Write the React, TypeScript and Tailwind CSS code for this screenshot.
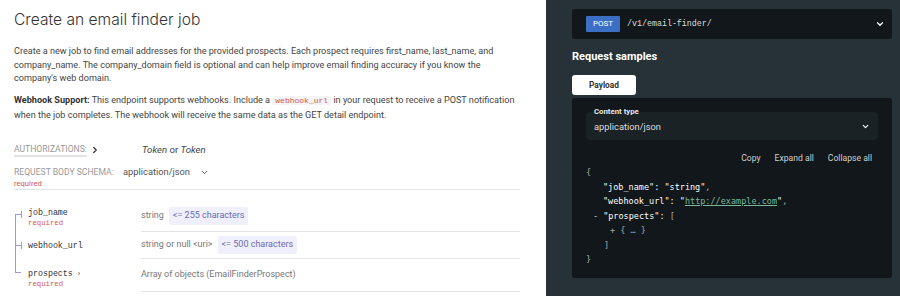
import { ChevronDown, ChevronRight } from "lucide-react";

const mono = "font-['Liberation_Mono',monospace]";
const codeFont = "font-['DejaVu_Sans_Mono',monospace]";

function Field({
  name,
  required,
  type,
  badge,
  more,
  first,
  last,
  rowClass,
  namePad,
}: {
  name: string;
  required?: boolean;
  type: string;
  badge?: string;
  more?: boolean;
  first?: boolean;
  last?: boolean;
  rowClass: string;
  namePad: string;
}) {
  return (
    <div className={`flex ${rowClass}`}>
      {/* tree line on the left */}
      <div className="relative w-[127px] shrink-0 pl-[14px]">
        <span
          className={`absolute left-[1px] w-px bg-[#9c9cc9] ${first ? "top-[13px] bottom-0" : last ? "top-0 h-[14px]" : "top-0 bottom-0"}`}
        />
        <span className="absolute left-[1px] top-[13px] h-px w-[6px] bg-[#9c9cc9]" />
        {!last && <span className="absolute left-[7px] top-[10px] h-[7px] w-px bg-[#9c9cc9]" />}
        <div className={`${namePad} ${mono} text-[8.3px] leading-[10px] text-[#333]`}>
          {name}
          {more && <span className="ml-[5px] font-['Roboto',sans-serif] text-[8px]">›</span>}
        </div>
        {required && (
          <div className={`${mono} text-[7.3px] leading-[10px] text-[#d9534f]`}>required</div>
        )}
      </div>
      <div className="flex flex-1 items-center border-b border-[#e4e4e4] text-[9px] text-[#777]">
        <span>{type}</span>
        {badge && (
          <span className="ml-[5px] rounded-[2px] bg-[#eff0fb] px-[4px] py-[2px] text-[#6b6bb5]">
            {badge}
          </span>
        )}
      </div>
    </div>
  );
}

export default function App() {
  return (
    <div className="flex h-[296px] w-[900px] overflow-hidden font-['Roboto',sans-serif]">
      <div className="w-[546px] shrink-0 bg-white pl-[14px] pr-[26px]">
        <h1 className="pt-[10px] font-['Inter',sans-serif] text-[15.6px] leading-[20px] font-light text-[#333]">
          Create an email finder job
        </h1>
        <p className="mt-[15px] text-[9.1px] leading-[13.7px] text-[#444]">
          Create a new job to find email addresses for the provided prospects. Each prospect requires first_name, last_name, and
          company_name. The company_domain field is optional and can help improve email finding accuracy if you know the
          company's web domain.
        </p>
        <p className="mt-[7px] text-[9.1px] leading-[14px] text-[#444]">
          <b className="font-bold text-[#333]">Webhook Support:</b> This endpoint supports webhooks. Include a{" "}
          <code className={`${mono} rounded-[2px] bg-[#f4f4f4] px-[3px] text-[8px] text-[#d9534f]`}>webhook_url</code>{" "}
          in your request to receive a POST notification when the job completes. The webhook will receive the same data as the GET detail endpoint.
        </p>

        <div className="mt-[21px] flex h-[14px] items-center">
          <div className="flex w-[128px] items-center">
            <span className="border-b-2 border-[#e2e2e2] text-[8.6px] leading-[12px] text-[#999]">AUTHORIZATIONS:</span>
            <ChevronRight className="ml-[3px] h-[10px] w-[10px] text-[#333]" strokeWidth={3} />
          </div>
          <span className="text-[9.6px] text-[#444]">
            <i>Token</i> or <i>Token</i>
          </span>
        </div>

        <div className="mt-[9px] flex h-[12px] items-center">
          <span className="w-[109px] text-[8.6px] leading-[12px] text-[#999]">REQUEST BODY SCHEMA:</span>
          <span className="text-[9.3px] text-[#555]">application/json</span>
          <ChevronDown className="ml-[10px] h-[9px] w-[9px] text-[#555]" strokeWidth={2.5} />
        </div>
        <div className="pt-[1px] text-[7.6px] leading-[10px] text-[#d9534f]">required</div>
        <div className="border-b border-[#e4e4e4]" />

        <div className="pt-[11px]">
          <Field name="job_name" required type="string" badge="<= 255 characters" first rowClass="h-[31px]" namePad="pt-[7px]" />
          <Field name="webhook_url" type="string or null <uri>" badge="<= 500 characters" rowClass="h-[27px]" namePad="pt-[9px]" />
          <Field name="prospects" required more type="Array of objects (EmailFinderProspect)" last rowClass="h-[33px]" namePad="pt-[10px]" />
        </div>
      </div>

      <div className="flex-1 bg-[#263238] pl-[26px] pr-[8px]">
        <div className="mt-[9px] flex h-[30px] items-center rounded-[3px] bg-[#11171a] pl-[14px] pr-[7px]">
          <span className="flex h-[16px] items-center rounded-[1px] bg-[#3a6fc5] px-[7px] text-[8px] text-white">POST</span>
          <span className={`ml-[7px] ${mono} text-[8.3px] text-[#ddd]`}>/v1/email-finder/</span>
          <ChevronDown className="ml-auto h-[10px] w-[10px] text-white" strokeWidth={3} />
        </div>

        <h3 className="mt-[11px] text-[11px] leading-[14px] font-bold text-white">Request samples</h3>

        <button className="mt-[11px] flex h-[20px] w-[64px] items-center justify-center rounded-[3px] bg-white text-[8.3px] font-bold text-[#333]">
          Payload
        </button>

        <div className="mt-[3px] h-[180px] rounded-[3px] bg-[#11171a] px-[14px] pt-[14px]">
          <div className="relative flex h-[28px] items-center rounded-[4px] bg-[#1a2226] px-[8px] text-[9.3px] text-[#ddd]">
            <span className="absolute -top-[5px] left-[8px] text-[7.8px] font-bold leading-[10px] text-[#e6e6e6]">Content type</span>
            <span className="pt-[2px]">application/json</span>
            <ChevronDown className="ml-auto h-[9px] w-[9px] text-white" strokeWidth={3} />
          </div>

          <div className="mt-[12px] flex h-[12px] items-center justify-end gap-[14px] pr-[6px] text-[8.6px] text-[#cfcfcf]">
            <span>Copy</span>
            <span>Expand all</span>
            <span>Collapse all</span>
          </div>

          <div className={`mt-[1px] ${codeFont} text-[8.5px] leading-[14.5px] text-white`}>
            <div className="text-[#aaa]">{"{"}</div>
            <div className="pl-[17px]">
              "job_name": "string"<span className="text-[#aaa]">,</span>
            </div>
            <div className="pl-[17px]">
              "webhook_url": "<span className="text-[#79b99a] underline">http://example.com</span>"<span className="text-[#aaa]">,</span>
            </div>
            <div className="pl-[7px]">
              <span className="mr-[5px] text-[#ccc]">-</span>"prospects": <span className="text-[#aaa]">[</span>
            </div>
            <div className="pl-[24px] text-[#aaa]">+ {"{ … }"}</div>
            <div className="pl-[18px] text-[#aaa]">]</div>
            <div className="text-[#aaa]">{"}"}</div>
          </div>
        </div>
      </div>
    </div>
  );
}
